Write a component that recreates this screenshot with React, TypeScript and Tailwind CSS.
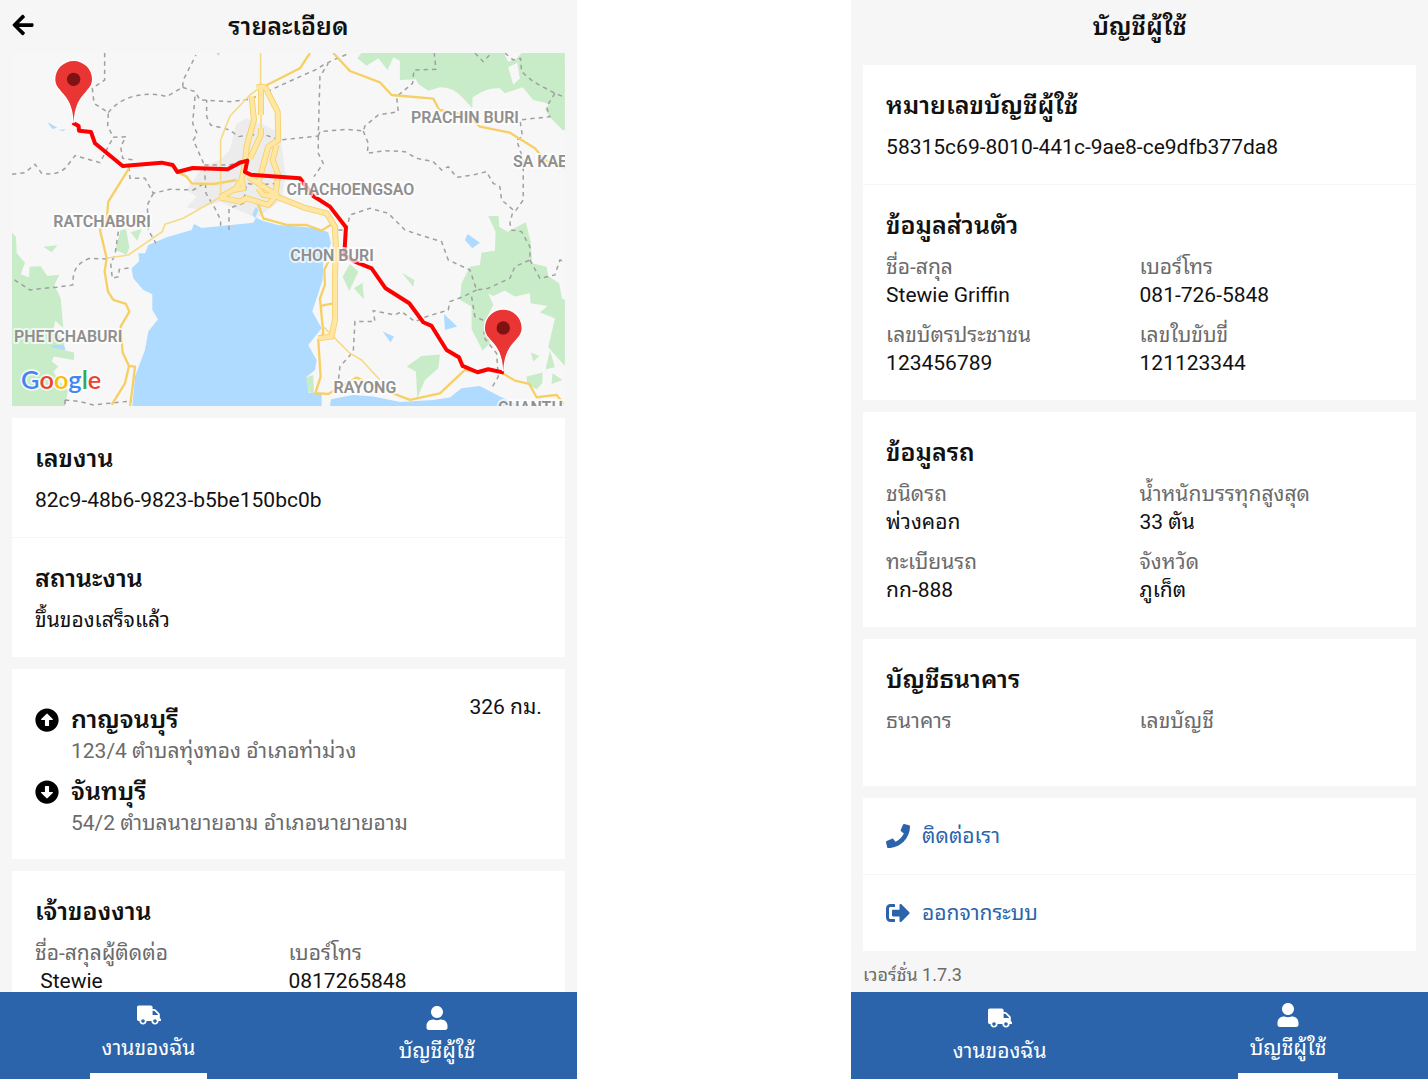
import type { ReactNode } from "react";
import {
  FaArrowAltCircleDown,
  FaArrowAltCircleUp,
  FaArrowLeft,
  FaPhone,
  FaSignOutAlt,
  FaTruck,
  FaUser,
} from "react-icons/fa";

const provinces = [
  { name: "PRACHIN BURI", x: 1233, y: 369 },
  { name: "SA KAEO", x: 1539, y: 501 },
  { name: "CHACHOENGSAO", x: 860, y: 584 },
  { name: "RATCHABURI", x: 160, y: 681 },
  { name: "CHON BURI", x: 871, y: 784 },
  { name: "PHETCHABURI", x: 42, y: 1025 },
  { name: "RAYONG", x: 1001, y: 1180 },
  { name: "CHANTHABURI", x: 1494, y: 1240 },
];

const cityRoads = [
  "M755 290L762 360 740 440 735 490 725 540 700 575M795 260L833 335 835 420 805 440 775 550",
  "M783 265V345M783 385V405L750 475M830 435L818 480 835 525 825 590",
  "M660 592L720 605 740 595 805 615 830 585 775 550 745 530",
  "M660 592L700 570 730 565 725 530M775 565L790 585 830 590 910 622 980 640 1005 680 1008 750 1005 830 1005 960 995 1010 955 1015",
  "M770 262L795 260",
];

function Pin({ x, y }: { x: number; y: number }) {
  return (
    <g transform={`translate(${x} ${y})`}>
      <path
        d="M0 2C-2-48-17-70-36-90-47-103-55-112-55-128A55 55 0 0 1 55-128C55-112 47-103 36-90 17-70 2-48 0 2Z"
        fill="#ea3535"
        stroke="#fff"
        strokeWidth="7"
        paintOrder="stroke"
      />
      <circle cy="-128" r="20" fill="#7f1212" />
    </g>
  );
}

function RouteMap() {
  return (
    <svg
      viewBox="36 159 1659 1059"
      className="block w-full"
      role="img"
      aria-label="แผนที่เส้นทาง"
    >
      <rect x="36" y="159" width="1659" height="1059" fill="#f7f7f7" />

      {/* built-up area */}
      <path
        fill="#ececec"
        d="M708 372L740 355 792 375 840 400 856 520 845 600 770 655 660 605 590 628 560 622 590 590 560 570 610 500 660 480 690 450Z"
      />

      {/* parks and forests */}
      <g fill="#c8ebc8">
        <path d="M1072 175L1084 159H1512L1525 185 1548 178 1565 159H1695V390H1688L1650 352 1635 328 1650 312 1600 300 1568 262 1515 280 1500 265Q1460 262 1418 292L1417 325 1390 295Q1360 260 1320 262L1285 272 1255 252 1248 238 1200 240V182L1180 172 1163 210 1135 175 1100 197Z" />
        <path d="M36 698L48 710 50 760 75 788 62 823 87 832 89 800 122 799 142 828 178 824 163 855 182 895 190 985 166 962 160 990 195 1020 190 1050 222 1058V1080L162 1070 155 1085 175 1100 160 1115 178 1145 205 1170 195 1218H36Z" />
        <path d="M130 740L172 736 155 757ZM362 690L378 688 388 742 380 764 346 750ZM392 697L425 687 412 722Z" />
        <path d="M1465 648H1496L1498 680 1523 695 1578 667 1592 725 1597 790 1640 800 1645 828 1678 850 1686 895 1695 900V1098L1645 1042 1665 955 1620 938 1643 918 1592 910 1590 880 1545 890 1515 872 1480 888 1465 880 1480 915 1460 955 1470 1030 1448 1052 1415 988V920L1380 900 1385 850 1410 800 1440 795 1445 758 1485 752 1487 695Z" />
        <path d="M1050 792L1075 815 1048 873 1028 830ZM1062 865L1088 848 1092 898ZM1206 818L1243 840 1240 860ZM1265 1068L1320 1064 1315 1105 1275 1140 1252 1195 1248 1115 1220 1100 1255 1075ZM918 1133L940 1125 942 1183 920 1172ZM1593 1058L1618 1068 1600 1085ZM1650 1052L1665 1102 1637 1108ZM1580 1130L1628 1118 1627 1150 1610 1168 1582 1152ZM1658 1120L1688 1140 1655 1152Z" />
      </g>
      <path fill="#f7f7f7" d="M1525 202L1552 188 1560 235 1540 254Z" />

      {/* sea and lakes */}
      <g fill="#aedbff">
        <path d="M397 1218L405 1130 435 1050 445 995 474 958 457 930V883L430 870 400 835 395 805 418 783 415 760H435L445 735 500 712 575 690 582 672 605 684 760 668 768 653 790 663 835 675 950 684 985 697 993 730 970 790 968 840 937 935 965 985 925 1035 950 1080 945 1110 918 1133 925 1178 965 1182V1218Z" />
        <path d="M990 1218L993 1198 1060 1185 1120 1190 1200 1206 1300 1200 1350 1193 1385 1165 1440 1158 1500 1190 1560 1218Z" />
        <path d="M142 366L172 383 157 387ZM175 390L198 388 190 393ZM1395 720L1403 702 1440 728 1417 745ZM1332 942L1372 980 1335 990ZM1148 995L1182 1010 1172 1028ZM757 642L768 620 775 630 765 655ZM155 1035H192L197 1052 155 1042ZM650 159H660L655 168Z" />
      </g>

      {/* province borders */}
      <g fill="none" stroke="#a0a0a0" strokeWidth="4.5" strokeDasharray="13 12">
        <path d="M314 159V240L277 265 282 310 325 338 323 378 340 412 378 410 362 440 368 475 400 480" />
        <path d="M325 338C370 280 450 275 500 290L548 262 550 240 588 165M548 262L585 275 600 300 690 305 750 298 900 230 945 210 970 195 1000 180 1050 159" />
        <path d="M585 290L578 370 592 402 580 420 613 495 618 580 645 625 662 660V690M613 495H690L742 475 750 405 715 410 690 390 632 375 620 350V300M750 405L790 403 840 420 955 408 960 230 985 190" />
        <path d="M36 523L75 518 105 493 125 520Q175 528 200 500L225 467 300 488 330 430 340 412M387 500L390 535 435 535 460 580 510 568 580 570 613 550M460 580L442 615 445 690 468 730" />
        <path d="M955 408L960 395 1040 388 1090 393 1095 378 1135 345 1195 335 1190 290 1238 250 1242 210 1308 208 1303 159M1090 393L1105 430 1102 460 1155 452 1215 455 1250 475 1300 485 1325 510 1345 500 1370 532 1420 525 1460 515 1480 550 1500 560 1505 600 1540 630 1530 670 1535 690 1565 695 1590 740 1590 780 1545 800 1530 835 1465 865 1430 870 1410 810 1345 780 1325 725 1260 705 1215 690 1165 640 1110 625 1050 645 1040 690 1000 690" />
        <path d="M955 408L955 460 970 490 942 530M1425 159L1450 185 1475 159M1515 159L1540 180 1562 175 1565 215 1600 245 1665 280 1690 290M1665 280L1640 320 1650 350 1560 360 1568 410 1550 420 1570 480 1570 600 1545 635" />
        <path d="M355 695L345 765 332 790 337 835 355 830 358 808 395 803M320 777L270 775Q225 790 220 830L218 855 170 862 130 865 90 870 36 835M195 1200L240 1205 280 1215 395 1203M195 1200V1218" />
        <path d="M1430 870L1390 890 1350 905 1345 930 1280 950 1245 965 1205 935 1185 945 1120 932 1125 965 1065 965 1060 1055 1020 1100 1015 1145M1415 890L1425 950 1460 965 1450 1010 1490 1060 1495 1130 1475 1165M1590 780L1620 835 1665 825 1680 780 1695 785M687 690V625L730 610 740 550 770 555 840 550" />
      </g>

      {/* highways */}
      <g fill="none" stroke="#f6cf65" strokeLinejoin="round">
        <g strokeWidth="7">
          <path d="M795 258L900 205 930 159M1000 159L1050 213 1140 247 1175 285 1300 296 1318 330 1400 345 1440 380 1530 398 1605 445 1635 480 1695 505" />
          <path d="M387 505L325 605 320 660 300 690 320 775 314 815 324 875 340 900 378 912 388 935 362 980 368 1058 387 1098 405 1100 398 1160 390 1218M387 1098L375 1150 335 1215" />
          <path d="M532 516L560 530 575 550 640 552 710 540M770 600L790 655 860 675 920 675 965 692 1000 670" />
          <path d="M985 785L973 810 975 855 960 895 970 1000 955 1020 962 1130 946 1180 985 1182 1070 1133 1140 1165 1230 1200 1320 1180 1395 1110 1433 1117M962 918L1000 910M1508 1120L1545 1142 1588 1152 1610 1192 1670 1185 1695 1215" />
        </g>
        <path
          stroke="#f8da86"
          strokeWidth="5"
          d="M782 159V255M783 345V385M660 592L550 655 495 673 487 695 385 765 320 775M662 592V420L690 348 750 285 770 270M970 980L1050 1060 1085 1080 1140 1140"
        />
        {cityRoads.map((d) => (
          <path key={d} d={d} strokeWidth="18" />
        ))}
        {cityRoads.map((d) => (
          <path key={d} d={d} stroke="#ffe6a2" strokeWidth="13" />
        ))}
      </g>

      {/* delivery route */}
      <path
        fill="none"
        stroke="#ff0000"
        strokeWidth="12"
        strokeLinejoin="round"
        d="M218 368L236 378 237 392 273 396 285 430 368 498 485 488 518 495 532 516 578 504 683 508 720 488 742 482 735 516 752 524 900 535 940 588 990 620 1038 682 1033 765 1065 785 1115 805 1157 865 1228 910 1270 967 1295 978 1340 1050 1377 1072 1388 1098 1433 1117 1465 1108 1512 1118"
      />

      <g
        fontFamily="Roboto, sans-serif"
        fontSize="48"
        fontWeight="600"
        fill="#8f8f8f"
        stroke="#fff"
        strokeOpacity="0.7"
        strokeWidth="12"
        strokeLinejoin="round"
        paintOrder="stroke"
      >
        {provinces.map((p) => (
          <text key={p.name} x={p.x} y={p.y}>
            {p.name}
          </text>
        ))}
      </g>

      <Pin x={221} y={366} />
      <Pin x={1510} y={1112} />

      <text
        x="63"
        y="1167"
        fontFamily="Lato, sans-serif"
        fontSize="76"
        fontWeight="600"
        stroke="#fff"
        strokeOpacity="0.8"
        strokeWidth="10"
        strokeLinejoin="round"
        paintOrder="stroke"
      >
        <tspan fill="#4285f4">G</tspan>
        <tspan fill="#ea4335">o</tspan>
        <tspan fill="#fbbc05">o</tspan>
        <tspan fill="#4285f4">g</tspan>
        <tspan fill="#34a853">l</tspan>
        <tspan fill="#ea4335">e</tspan>
      </text>
    </svg>
  );
}

function Header({ title, back }: { title: string; back?: boolean }) {
  return (
    <header className="relative flex h-[53px] shrink-0 items-center justify-center">
      {back && (
        <button type="button" aria-label="ย้อนกลับ" className="absolute top-[13px] left-[11px] text-black">
          <FaArrowLeft size={24} />
        </button>
      )}
      <h1 className="text-[25px] leading-[34px] font-semibold">{title}</h1>
    </header>
  );
}

function Card({ children }: { children: ReactNode }) {
  return <div className="shrink-0 divide-y divide-[#f6f6f6] bg-white">{children}</div>;
}

function Section({ title, children }: { title: string; children: ReactNode }) {
  return (
    <section className="px-[23px] pt-6 pb-[23px]">
      <h2 className="mb-[10px] text-[25px] leading-[34px] font-semibold">{title}</h2>
      {children}
    </section>
  );
}

function Fields({ items }: { items: [string, string][] }) {
  return (
    <dl className="grid grid-cols-2 gap-y-3">
      {items.map(([label, value]) => (
        <div key={label}>
          <dt className="text-[#6b6b6b]">{label}</dt>
          <dd className="min-h-7 whitespace-pre">{value}</dd>
        </div>
      ))}
    </dl>
  );
}

function Stop({ icon, name, address }: { icon: ReactNode; name: string; address: string }) {
  return (
    <li className="grid grid-cols-[24px_1fr] items-center gap-x-3">
      <span className="text-black">{icon}</span>
      <h2 className="text-[25px] leading-[34px] font-semibold">{name}</h2>
      <p className="col-start-2 text-[#6b6b6b]">{address}</p>
    </li>
  );
}

function ActionLink({ icon, label }: { icon: ReactNode; label: string }) {
  return (
    <a href="#" className="flex items-center gap-3 px-[23px] py-6 text-[#2b64aa]">
      {icon}
      {label}
    </a>
  );
}

function TabBar({ active }: { active: "jobs" | "account" }) {
  const tabs = [
    { id: "jobs", label: "งานของฉัน", icon: <FaTruck size={24} /> },
    { id: "account", label: "บัญชีผู้ใช้", icon: <FaUser size={24} /> },
  ];
  return (
    <nav className="flex h-[87px] shrink-0 justify-around bg-[#2b64aa] text-white">
      {tabs.map((tab) => (
        <a
          key={tab.id}
          href="#"
          aria-current={tab.id === active ? "page" : undefined}
          className={
            tab.id === active
              ? "flex flex-col items-center justify-center gap-[7px] border-b-6 border-white px-3"
              : "flex flex-col items-center justify-center gap-[7px] px-3"
          }
        >
          {tab.icon}
          {tab.label}
        </a>
      ))}
    </nav>
  );
}

function Screen({ children }: { children: ReactNode }) {
  return <div className="flex h-screen min-w-0 flex-col bg-[#f6f6f6]">{children}</div>;
}

export default function App() {
  return (
    <div className="grid grid-cols-[577fr_577fr] gap-x-[19.2%] bg-white font-[Roboto,'Noto_Sans_Thai_Looped','Noto_Sans',sans-serif] text-[21px] leading-7 text-[#111]">
      <Screen>
        <Header title="รายละเอียด" back />
        <main className="flex min-h-0 flex-1 flex-col gap-3 overflow-hidden px-3">
          <div className="shrink-0">
            <RouteMap />
          </div>
          <Card>
            <Section title="เลขงาน">
              <p>82c9-48b6-9823-b5be150bc0b</p>
            </Section>
            <Section title="สถานะงาน">
              <p>ขึ้นของเสร็จแล้ว</p>
            </Section>
          </Card>
          <Card>
            <div className="flex items-start justify-between px-[23px] pt-6 pb-[22px]">
              <ul className="flex flex-col gap-[10px] pt-[10px]">
                <Stop
                  icon={<FaArrowAltCircleUp size={24} />}
                  name="กาญจนบุรี"
                  address="123/4 ตำบลทุ่งทอง อำเภอท่าม่วง"
                />
                <Stop
                  icon={<FaArrowAltCircleDown size={24} />}
                  name="จันทบุรี"
                  address="54/2 ตำบลนายายอาม อำเภอนายายอาม"
                />
              </ul>
              <p>326 กม.</p>
            </div>
          </Card>
          <Card>
            <Section title="เจ้าของงาน">
              <Fields
                items={[
                  ["ชื่อ-สกุลผู้ติดต่อ", " Stewie"],
                  ["เบอร์โทร", "0817265848"],
                ]}
              />
            </Section>
          </Card>
        </main>
        <TabBar active="jobs" />
      </Screen>

      <Screen>
        <Header title="บัญชีผู้ใช้" />
        <main className="flex min-h-0 flex-1 flex-col gap-3 overflow-hidden px-3 pt-3">
          <Card>
            <Section title="หมายเลขบัญชีผู้ใช้">
              <p>58315c69-8010-441c-9ae8-ce9dfb377da8</p>
            </Section>
            <Section title="ข้อมูลส่วนตัว">
              <Fields
                items={[
                  ["ชื่อ-สกุล", "Stewie Griffin"],
                  ["เบอร์โทร", "081-726-5848"],
                  ["เลขบัตรประชาชน", "123456789"],
                  ["เลขใบขับขี่", "121123344"],
                ]}
              />
            </Section>
          </Card>
          <Card>
            <Section title="ข้อมูลรถ">
              <Fields
                items={[
                  ["ชนิดรถ", "พ่วงคอก"],
                  ["น้ำหนักบรรทุกสูงสุด", "33 ตัน"],
                  ["ทะเบียนรถ", "กก-888"],
                  ["จังหวัด", "ภูเก็ต"],
                ]}
              />
            </Section>
          </Card>
          <Card>
            <Section title="บัญชีธนาคาร">
              <Fields
                items={[
                  ["ธนาคาร", ""],
                  ["เลขบัญชี", ""],
                ]}
              />
            </Section>
          </Card>
          <Card>
            <ActionLink icon={<FaPhone size={24} />} label="ติดต่อเรา" />
            <ActionLink icon={<FaSignOutAlt size={24} />} label="ออกจากระบบ" />
          </Card>
          <p className="text-lg leading-6 text-[#6b6b6b]">เวอร์ชั่น 1.7.3</p>
        </main>
        <TabBar active="account" />
      </Screen>
    </div>
  );
}
